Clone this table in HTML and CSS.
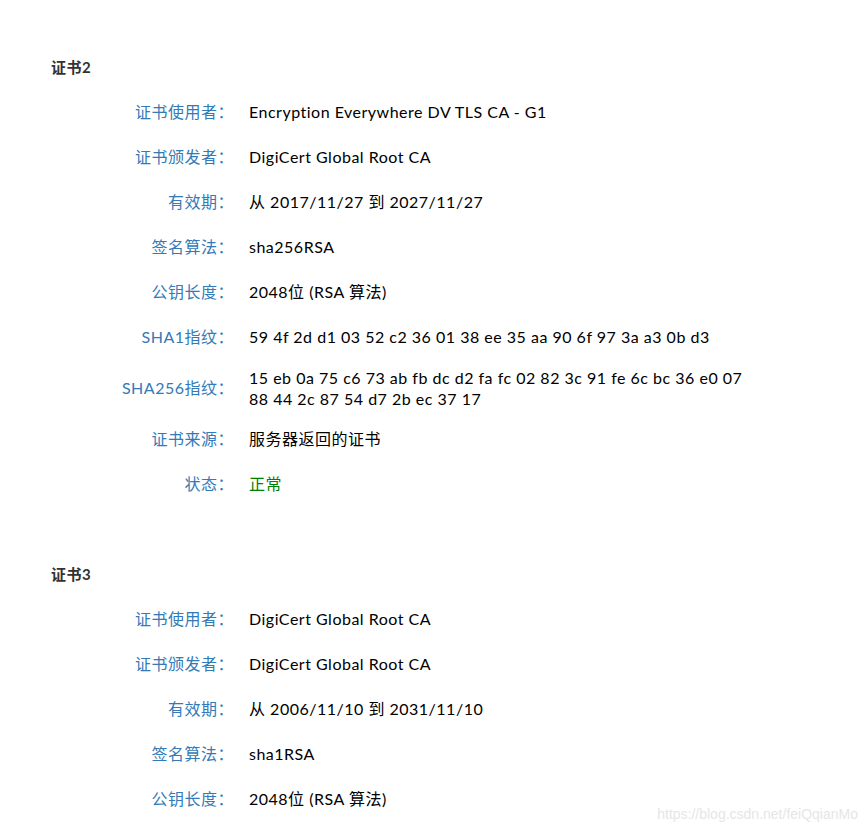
FILE: index.html
```html
<!DOCTYPE html>
<html lang="zh-CN">
<head>
    <meta charset="UTF-8">
    <meta name="viewport" content="width=device-width, initial-scale=1.0">
    <title>证书链</title>
    <link rel="stylesheet" href="styles.css">
</head>
<body>
    <div class="container">
        <div class="cert">
            <h3>证书2</h3>
            <div class="row"><div class="label">证书使用者：</div><div class="value">Encryption Everywhere DV TLS CA - G1</div></div>
            <div class="row"><div class="label">证书颁发者：</div><div class="value">DigiCert Global Root CA</div></div>
            <div class="row"><div class="label">有效期：</div><div class="value">从 2017/11/27 到 2027/11/27</div></div>
            <div class="row"><div class="label">签名算法：</div><div class="value">sha256RSA</div></div>
            <div class="row"><div class="label">公钥长度：</div><div class="value">2048位 (RSA 算法)</div></div>
            <div class="row"><div class="label">SHA1指纹：</div><div class="value">59 4f 2d d1 03 52 c2 36 01 38 ee 35 aa 90 6f 97 3a a3 0b d3</div></div>
            <div class="row"><div class="label">SHA256指纹：</div><div class="value">15 eb 0a 75 c6 73 ab fb dc d2 fa fc 02 82 3c 91 fe 6c bc 36 e0 07 88 44 2c 87 54 d7 2b ec 37 17</div></div>
            <div class="row"><div class="label">证书来源：</div><div class="value">服务器返回的证书</div></div>
            <div class="row"><div class="label">状态：</div><div class="value ok">正常</div></div>
        </div>

        <div class="cert">
            <h3>证书3</h3>
            <div class="row"><div class="label">证书使用者：</div><div class="value">DigiCert Global Root CA</div></div>
            <div class="row"><div class="label">证书颁发者：</div><div class="value">DigiCert Global Root CA</div></div>
            <div class="row"><div class="label">有效期：</div><div class="value">从 2006/11/10 到 2031/11/10</div></div>
            <div class="row"><div class="label">签名算法：</div><div class="value">sha1RSA</div></div>
            <div class="row"><div class="label">公钥长度：</div><div class="value">2048位 (RSA 算法)</div></div>
        </div>
    </div>

    <div class="watermark">https://blog.csdn.net/feiQqianMo</div>
</body>
</html>
```

FILE: styles.css
```css
html, body {
    height: 100%;
    overflow: hidden;
}
body {
    font-family: "Segoe UI", Lato, "Noto Sans CJK SC", sans-serif;
    font-size: 16px;
    letter-spacing: 0.5px;
    margin: 0;
    background-color: #fff;
    color: #000;
    position: relative;
}
.container {
    padding: 57px 0 0 51px;
}
.cert {
    margin-bottom: 58px;
}
h3 {
    margin: 0 0 11px 0;
    font-size: 15px;
    line-height: 21px;
    font-weight: bold;
    color: #333;
}
.row {
    display: grid;
    grid-template-columns: 183px 500px;
    column-gap: 15px;
    align-items: center;
    min-height: 45px;
    padding: 7.5px 0;
    box-sizing: border-box;
}
.label {
    text-align: right;
    color: #337ab7;
    line-height: 21px;
}
.value {
    line-height: 21px;
}
.ok {
    color: #008000;
}
.watermark {
    position: absolute;
    right: 9px;
    bottom: 8px;
    font-family: "Liberation Sans", Arial, sans-serif;
    font-size: 14px;
    letter-spacing: 0;
    color: #e6e6e6;
}
```
